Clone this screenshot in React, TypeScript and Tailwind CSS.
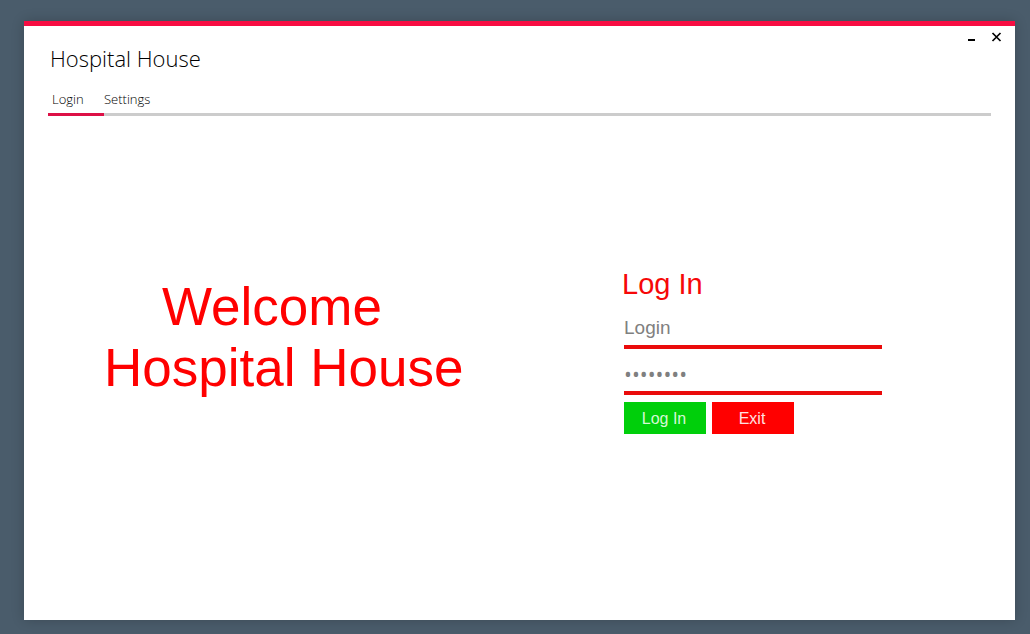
const inputClass =
  'block h-[26px] w-full bg-transparent pb-0.5 text-[#7f8080] outline-none placeholder:text-[#7f8080] placeholder:opacity-100';

const buttonClass = 'h-8 w-[82px] pr-0.5 text-base leading-[34px]';

export default function App() {
  return (
    <div className="flex min-h-screen bg-[#4a5c6b] pt-[21px] pr-[15px] pb-[14px] pl-6 font-['Liberation_Sans',Arial,sans-serif]">
      <div className="flex min-w-0 flex-1 flex-col border-t-[5px] border-[#f70d42] bg-white shadow-[0_0_12px_rgba(0,0,0,0.2)]">
        <header className="flex items-start justify-between pl-[26px] font-['Open_Sans','Segoe_UI',sans-serif]">
          <h1 className="pt-4 text-[22px] leading-8 font-light text-black">Hospital House</h1>
          <div className="flex pr-1.5">
            <button type="button" aria-label="Minimize" className="flex h-5 w-[25px] items-center justify-center">
              <svg viewBox="0 0 11 11" className="h-[11px] w-[11px]" aria-hidden="true">
                <path d="M2 8h7v2H2z" fill="#000" />
              </svg>
            </button>
            <button type="button" aria-label="Close" className="flex h-5 w-[25px] items-center justify-center">
              <svg viewBox="0 0 11 11" className="h-[11px] w-[11px]" aria-hidden="true">
                <path d="M1.5 2l8 8M9.5 2l-8 8" stroke="#000" strokeWidth="1.7" fill="none" />
              </svg>
            </button>
          </div>
        </header>

        <nav
          role="tablist"
          className="mx-6 mt-3 flex h-[30px] font-['Open_Sans','Segoe_UI',sans-serif] text-[13px] leading-[26px] font-light text-black shadow-[inset_0_-3px_0_#cccccc]"
        >
          <button type="button" role="tab" aria-selected="true" className="flex w-14 border-b-[3px] border-[#dd1046] pl-1">
            Login
          </button>
          <button type="button" role="tab" aria-selected="false" className="flex">
            Settings
          </button>
        </nav>

        <main className="grid flex-1 grid-cols-[600fr_391fr] items-start pt-[152px]">
          <h2 className="pt-2 pl-20 text-[53px] leading-[61px] whitespace-nowrap text-[#ff0000]">
            <span className="block pl-[58px]">Welcome</span>
            <span className="block">Hospital House</span>
          </h2>

          <form className="w-[258px]" onSubmit={(e) => e.preventDefault()}>
            <h3 className="-ml-0.5 h-8 text-[29px] leading-8 text-[#f60808]">Log In</h3>
            <div className="mt-4 border-b-4 border-[#ea0b0b] pb-[3px]">
              <input
                type="text"
                aria-label="Login"
                placeholder="Login"
                className={inputClass + " font-['Liberation_Sans',Arial,sans-serif] text-[19px] leading-6"}
              />
            </div>
            <div className="mt-[13px] border-b-4 border-[#ea0b0b] pb-[3px]">
              <input
                type="password"
                aria-label="Password"
                defaultValue="password"
                className={inputClass + " font-['Open_Sans',sans-serif] text-[21px] leading-6"}
              />
            </div>
            <div className="mt-[7px] flex gap-1.5">
              <button type="submit" className={buttonClass + ' bg-[#00cf0b] text-[#d5f8d6]'}>
                Log In
              </button>
              <button type="button" className={buttonClass + ' bg-[#ff0000] text-[#ffe0e0]'}>
                Exit
              </button>
            </div>
          </form>
        </main>
      </div>
    </div>
  );
}
